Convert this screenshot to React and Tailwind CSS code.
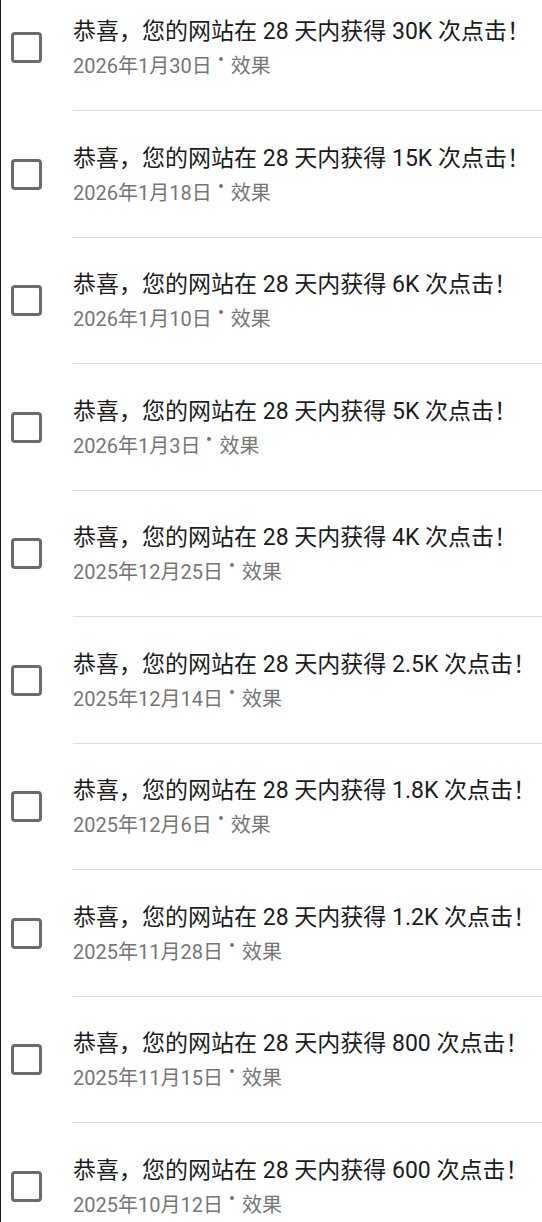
import React from "react";

const items = [
  ["30K", "2026年1月30日"],
  ["15K", "2026年1月18日"],
  ["6K", "2026年1月10日"],
  ["5K", "2026年1月3日"],
  ["4K", "2025年12月25日"],
  ["2.5K", "2025年12月14日"],
  ["1.8K", "2025年12月6日"],
  ["1.2K", "2025年11月28日"],
  ["800", "2025年11月15日"],
  ["600", "2025年10月12日"],
];

function Row({ clicks, date }) {
  return (
    <div className="flex h-[126.5px]">
      <div className="flex w-[72px] shrink-0 items-center pl-[10px]">
        <div className="h-[31px] w-[31px] rounded-[4px] border-[3px] border-[#6b6b6b]" />
      </div>
      <div className="flex flex-1 flex-col justify-center border-b border-[#dedede] pt-[4px]">
        <div className="text-[23px] leading-[34px] text-[#1c1c1c] whitespace-nowrap">
          恭喜，您的网站在 28 天内获得 {clicks} 次点击！
        </div>
        <div className="flex items-center text-[20px] leading-[34px] text-[#767676] whitespace-nowrap">
          <span>{date}</span>
          <span className="relative -top-[7px] ml-[7px] mr-[8px] h-[4px] w-[4px] rounded-full bg-[#767676]" />
          <span>效果</span>
        </div>
      </div>
    </div>
  );
}

export default function App() {
  return (
    <div
      className="h-[1222px] w-[542px] overflow-hidden border-l border-[#1a1a1a] bg-white"
      style={{ fontFamily: 'Roboto, "Noto Sans CJK SC", sans-serif' }}
    >
      <div className="-mt-[15.5px]">
        {items.map(([c, d], i) => (
          <Row key={i} clicks={c} date={d} />
        ))}
      </div>
    </div>
  );
}
